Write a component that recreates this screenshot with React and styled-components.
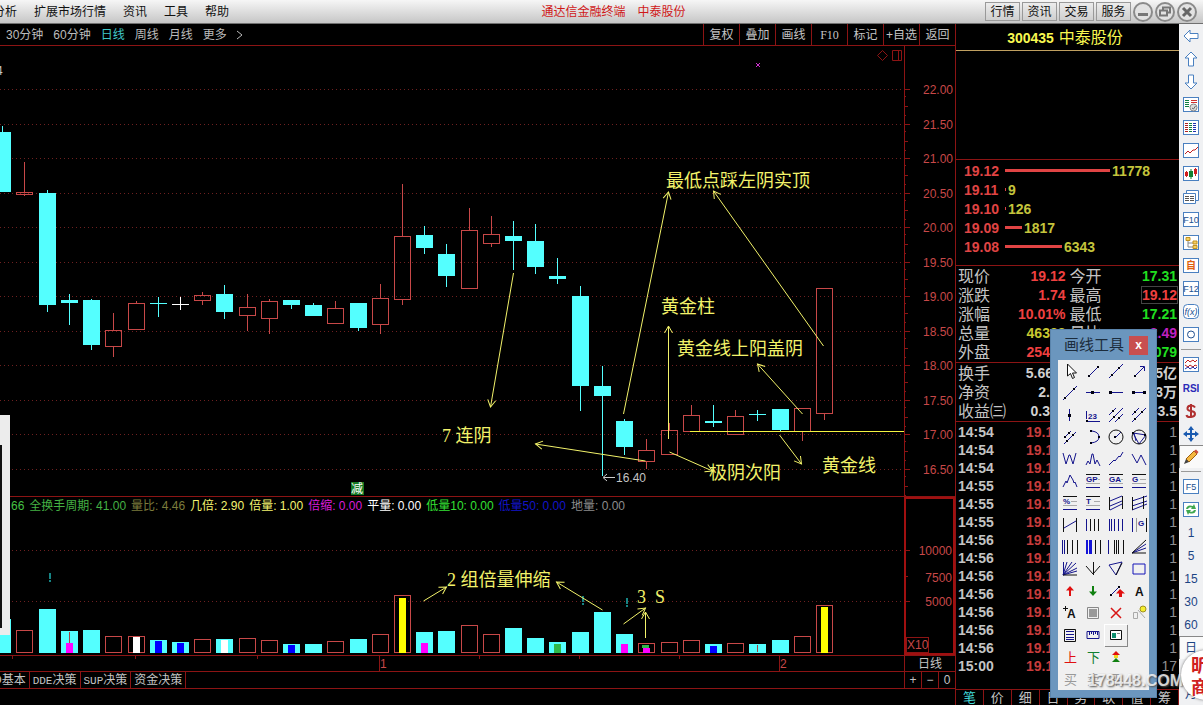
import React from 'react'
import styled, { createGlobalStyle } from 'styled-components'

const RED = '#8c1414'
const UP = '#c84848'
const DOWN = '#54ffff'
const NOTE = '#f2f26a'
const NAVY = '#14148c'

// x, high, body top, body bottom, low, kind
const candles = [
  [2, 126, 132, 192, 192, 'd'],
  [24, 162, 192, 195, 196, 'u'],
  [47, 190, 193, 305, 312, 'd'],
  [69, 294, 300, 303, 325, 'd'],
  [91, 299, 300, 345, 350, 'd'],
  [113, 313, 330, 347, 357, 'u'],
  [136, 301, 303, 330, 330, 'u'],
  [158, 297, 303, 304, 317, 'd'],
  [180, 297, 304, 305, 310, 'w'],
  [202, 292, 295, 301, 305, 'u'],
  [224, 285, 294, 312, 319, 'd'],
  [247, 294, 307, 316, 331, 'u'],
  [269, 299, 301, 319, 334, 'u'],
  [291, 300, 300, 305, 309, 'd'],
  [313, 303, 305, 316, 316, 'd'],
  [335, 301, 308, 324, 324, 'u'],
  [358, 303, 303, 328, 331, 'd'],
  [380, 284, 298, 325, 334, 'u'],
  [402, 184, 236, 300, 305, 'u'],
  [424, 226, 235, 248, 254, 'd'],
  [446, 244, 254, 276, 287, 'd'],
  [469, 208, 230, 289, 289, 'u'],
  [491, 216, 234, 244, 247, 'u'],
  [513, 221, 236, 241, 270, 'd'],
  [535, 224, 241, 267, 274, 'd'],
  [557, 258, 276, 279, 284, 'd'],
  [580, 286, 296, 386, 411, 'd'],
  [602, 366, 386, 396, 476, 'd'],
  [624, 419, 421, 447, 455, 'd'],
  [646, 439, 450, 462, 469, 'u'],
  [669, 423, 430, 455, 455, 'u'],
  [691, 405, 415, 432, 432, 'u'],
  [713, 405, 421, 423, 427, 'd'],
  [735, 410, 416, 435, 435, 'u'],
  [757, 410, 414, 415, 421, 'd'],
  [780, 409, 409, 430, 431, 'd'],
  [802, 408, 408, 432, 441, 'u'],
  [824, 288, 288, 414, 420, 'u'],
]

// top of each volume bar, then an optional inner marker [top, colour]
const volumes = [
  [619], [630], [609], [631, 643, '#f0f'], [630], [636], [636, 637, '#fff'],
  [640, 641, '#00f'], [642, 643, '#00f'], [639], [639, 640, '#fff'], [638],
  [640], [644, 645, '#00f'], [644], [641], [639], [634], [595, 598, '#ff0'],
  [632, 643, '#f0f'], [631], [625], [634], [628], [638], [642, 644, '#2fb84a'],
  [632], [612], [634, 644, '#f0f'], [643, 648, '#f0f'], [642], [640],
  [644, 646, '#00f'], [643], [644], [640], [636], [605, 607, '#ff0'],
]

const priceLevels = [
  '22.00', '21.50', '21.00', '20.50', '20.00', '19.50',
  '19.00', '18.50', '18.00', '17.50', '17.00', '16.50',
]
const levelY = (i) => Math.floor(89.5 + 34.5 * i)

const arrows = [
  [623, 414, 668, 192], [823, 346, 713, 191], [513, 273, 490, 407],
  [645, 461, 535, 444], [668, 439, 668, 326], [669, 452, 712, 471],
  [802, 414, 757, 364], [779, 435, 801, 464],
]
const volumeArrows = [
  [423, 601, 446, 587], [602, 610, 556, 582],
  [623, 624, 645, 608], [645, 638, 645, 612],
]
const notes = [
  [666, 187, '最低点踩左阴实顶'], [661, 313, '黄金柱'],
  [677, 355, '黄金线上阳盖阴'], [822, 472, '黄金线'],
  [709, 479, '极阴次阳'], [442, 442, '7 连阴'],
]

const Glyph = styled.text`
  font: ${(p) => (p.$big ? 'bold 12px' : p.$cjk ? '13px' : 'bold 8px')}
    'Liberation Sans', 'Noto Sans CJK SC', sans-serif;
  fill: ${(p) => p.$fill || (p.$big ? '#111' : NAVY)};
`

const Side = styled.text`
  font: ${(p) => (p.$italic ? 'italic' : '')} ${(p) => (p.$bold ? 'bold 10px' : '9px')}
    'Liberation Sans', 'Noto Sans CJK SC', sans-serif;
  fill: ${(p) => p.$fill || '#205090'};
  text-anchor: middle;
`

const Candle = ({ data }) => {
  const [x, high, top, bottom, low, kind] = data
  if (kind === 'u') {
    return (
      <g stroke={UP} fill='none' shapeRendering='crispEdges'>
        <path d={`M${x + 0.5} ${high}V${top}M${x + 0.5} ${bottom}V${low}`} />
        <rect x={x - 7.5} y={top + 0.5} width='16' height={bottom - top - 1} />
      </g>
    )
  }
  return (
    <g fill={kind === 'w' ? '#fff' : DOWN} shapeRendering='crispEdges'>
      <rect x={x} y={high} width='1' height={low - high} />
      <rect x={x - 8} y={top} width='17' height={bottom - top} />
    </g>
  )
}

const Volume = ({ x, up, data }) => {
  const [top, mark, color] = data
  return (
    <g shapeRendering='crispEdges'>
      {up ? (
        <rect x={x - 7.5} y={top + 0.5} width='16' height={652 - top} stroke={UP} fill='none' />
      ) : (
        <rect x={x - 8} y={top} width='17' height={653 - top} fill={DOWN} />
      )}
      {mark && <rect x={x - 3} y={mark} width='7' height={653 - mark} fill={color} />}
    </g>
  )
}

const Arrows = ({ id, list }) => (
  <g stroke={NOTE} fill='none'>
    <marker id={id} viewBox='-8 -5 10 10' markerWidth='10' markerHeight='10' orient='auto' markerUnits='userSpaceOnUse'>
      <path d='M-7 -4 0 0-7 4' />
    </marker>
    {list.map(([a, b, c, d]) => (
      <line key={`${a}-${b}`} x1={a + 0.5} y1={b} x2={c + 0.5} y2={d} markerEnd={`url(#${id})`} />
    ))}
  </g>
)

const PricePlot = () => (
  <Plot>
    <g transform='translate(0 -46)'>
      {priceLevels.map((p, i) => (
        <GridLine key={p} x1='0' x2='100%' y1={levelY(i) + 0.5} y2={levelY(i) + 0.5} />
      ))}
      {candles.map((c) => <Candle key={c[0]} data={c} />)}
      <path d='M690 431.5H2000' stroke='#f4f440' />
      <Arrows id='note-head' list={arrows} />
      {notes.map(([x, y, t]) => <Note key={t} x={x} y={y}>{t}</Note>)}
      <path d='M604 477.5H615M607 474l-4 3.500 4 3.500' stroke='#ccc' fill='none' />
      <Small x='616' y='482'>16.40</Small>
      <path d='m756 63 4 4m0-4-4 4' stroke='#d030d0' />
      <Small x='-4' y='75'>4</Small>
      <path d='m882.500 50.500 5 5-5 5-5-5z M892.500 50.500h9v10h-9z M898.500 50.500v10' stroke={RED} fill='none' />
      <rect x='351' y='482' width='13' height='13' fill='#167a24' />
      <Small x='351' y='493' $fill='#fff'>减</Small>
    </g>
  </Plot>
)

const VolumePlot = () => (
  <Plot>
    <g transform='translate(0 -515)'>
      <GridLine x1='0' x2='100%' y1='550.5' y2='550.5' />
      <GridLine x1='0' x2='100%' y1='601.5' y2='601.5' />
      {candles.map((c, i) => (
        <Volume key={c[0]} x={c[0]} up={c[5] === 'u'} data={volumes[i]} />
      ))}
      <path d='M69.500 632v11M757.500 645v7' stroke='#a04040' />
      <path d='M642 646.500h7' stroke='#2fb84a' strokeWidth='3' />
      <g fill='#168484'>
        <path d='M49 573h2v6h-2zM49 580h2v2h-2zM582 596h2v6h-2zM582 603h2v2h-2zM626 598h2v6h-2zM626 605h2v2h-2z' />
      </g>
      <Arrows id='volume-head' list={volumeArrows} />
      <Note x='447' y='586'>2 组倍量伸缩</Note>
      <Note x='637' y='603'>{'3  S'}</Note>
    </g>
  </Plot>
)

const PriceAxis = () => (
  <Axis>
    <Plot>
      <g transform='translate(0 -46)' stroke={RED}>
        {priceLevels.map((p, i) => (
          <path key={p} d={`M0 ${levelY(i) + 0.5}h5M0 ${levelY(i) + 17.5}h3M0 ${levelY(i) + 7.5}h1M0 ${levelY(i) + 26.5}h1`} />
        ))}
        {priceLevels.map((p, i) => (
          <Scale key={p} x='48' y={levelY(i) + 5}>{p}</Scale>
        ))}
      </g>
    </Plot>
  </Axis>
)

/* palette glyphs, each on a 20 x 20 field */

const dot = (x, y) => `M${x - 1} ${y - 1}h2v2h-2z`

const Lines = ({ d, k, dots, fill = 'none' }) => (
  <>
    {d && <path d={d} stroke={NAVY} fill={fill} />}
    {k && <path d={k} stroke='#111' fill='none' />}
    {dots && <path d={dots.map(([x, y]) => dot(x, y)).join('')} fill='#001' />}
  </>
)

const HLine = ({ dots }) => (
  <>
    <path d='M3 9.500h14' stroke={NAVY} />
    <path d={dots.map((x) => `M${x} 8h3v3h-3z`).join('')} fill='#001' />
  </>
)

const Lettered = ({ t }) => (
  <>
    <path d='M3 3.500h14' stroke='#111' />
    <path d='M11 8.500h6M3 12.500h14' stroke='#aaa' />
    <path d='M3 16.500h14' stroke={NAVY} />
    <rect x='3' y='5' width={t.length > 1 ? 12 : 7} height='7' fill='#f0f0f0' />
    <Glyph x='3' y='11'>{t}</Glyph>
  </>
)

const tools = [
  ['选择', <path d='M7.500 3v12l3-2.500 2 5 2-1-2-4.500h4z' fill='#fff' stroke='#111' />],
  ['线段', <Lines d='M6 15 15 6' dots={[[6, 15], [15, 6]]} />],
  ['直线', <Lines d='M3 17 17 3' dots={[[6, 14], [13, 7]]} />],
  ['箭头', <Lines d='M6 15 15 6M11 5.500h4.500V10' dots={[[6, 15]]} />],
  ['射线', <Lines d='M3 17 17 3' dots={[[5, 15], [14, 6]]} />],
  ['水平线', <HLine dots={[8]} />],
  ['水平射线', <HLine dots={[3]} />],
  ['水平线段', <HLine dots={[3, 14]} />],
  ['垂直线', <><path d='M9.500 4v12' stroke={NAVY} /><path d='M8 9h3v3H8z' fill='#001' /></>],
  ['价格标注', <><Lines d='M3.500 6v8M4 16.500h13' dots={[[4, 16]]} /><Glyph x='5' y='14'>23</Glyph></>],
  ['平行线组', <Lines d='M3 10 10 3M3 17 17 3M9 17l8-8' dots={[[7, 6], [8, 12], [13, 13]]} />],
  ['平行线', <Lines d='M3 10 10 3M3 17 17 3' dots={[[6, 7], [13, 7], [6, 14]]} />],
  ['等距线', <Lines d='M4 11 11 4M4 17 16 5' dots={[[5, 10], [9, 6], [7, 14], [13, 8]]} />],
  ['圆弧', <Lines d='M9 4q7 1 7 6t-8 6' dots={[[8, 4], [16, 10], [8, 16]]} />],
  ['圆', <Lines k='M17 10a7 7 0 1 1-14 0 7 7 0 1 1 14 0' d='m10 10 5-5' dots={[[9, 10]]} />],
  ['外接圆', <Lines k='M17 10a7 7 0 1 1-14 0 7 7 0 1 1 14 0' d='M4 6l13 2-7 9zM5 6l2 8' dots={[[4, 6], [16, 8]]} />],
  ['波段', <Lines d='M3 4l3 11 3-9 1 0 3 9 3-11' />],
  ['尖峰', <Lines d='M3 16l2-4 2 3 2-10 1 0 2 10 2-4 1 2 2 4' />],
  ['上升浪', <Lines d='M3 16l5-5 1 1 4-5 1 1 3-5' />],
  ['下降浪', <Lines d='M3 5l5 9 4-8 5 10' />],
  ['头肩', <Lines d='M3 16l3-6 1 2 3-8 3 5 1 3 1-1 2 5' />],
  ['黄金价位', <Lettered t='GP' />],
  ['黄金目标', <Lettered t='GA' />],
  ['黄金分割', <Lettered t='G' />],
  ['百分比', <Lettered t='%' />],
  ['分段', <Lettered t='T' />],
  ['速阻线', <Lines k='M3.500 4v13M16.500 3v13' d='M4 8 16 3M4 13 16 8M4 17l12-6' />],
  ['回归带', <Lines k='M3.500 4v13M14.500 3v13' d='M3 8 18 3M3 13 18 8M3 17l15-6' />],
  ['回归线', <Lines k='M3.500 3v14M16.500 3v14' d='M4 13 16 6' />],
  ['周期线', <Lines k='M7.500 4v12M11.500 4v12M15.500 4v12' d='M3.500 4v12' />],
  ['等分周期', <Lines d='M3.500 4v12M5.500 4v12M8.500 4v12M12.500 4v12M16.500 4v12' />],
  ['黄金周期', <><Lines k='M17.500 3v14' d='M3.500 3v14' /><path d='M7.500 3v14' stroke='#999' /><Glyph x='9' y='11'>G</Glyph></>],
  ['时间带', <Lines k='M7.500 3v14M12.500 3v14M17.500 3v14' d='M2.500 3v14M4.500 3v14' />],
  ['费波周期', <><path d='M3 3h2v14h-2zM6 3h3v14h-3z' fill='#1414d8' /><Lines k='M12.500 3v14M17.500 3v14' /></>],
  ['对称线', <Lines k='M8.500 3v14M10.500 3v14M12.500 3v14M17.500 3v14' d='M2.500 3v14' />],
  ['扇形线', <Lines k='M3 16 17 3M3 16h14' d='M3 16 17 7M3 16l14-5' />],
  ['江恩线', <Lines k='M3 16h14' d='M3.500 3v13M3 16 7 3M3 16 12 3M3 16 16 4M3 16l14-7M3 16l14-4' />],
  ['分叉', <Lines k='M3 7l7 8 7-8M10.500 3v13' />],
  ['三角形', <Lines d='M3 6 16 3 10 16z' k='m10 16 6-12' />],
  ['矩形', <path d='M4 5h12v10H4z' fill='none' stroke='#1414b8' />],
  ['上箭头', <path d='m10 5-4 4.500h3V15h2V9.500h3z' fill='#e01010' />],
  ['下箭头', <path d='m10 15-4-4.500h3V5h2v5.500h3z' fill='#108010' />],
  ['趋势标记', <><Lines d='M4 15 14 5' dots={[[5, 14], [13, 6]]} /><path d='m14 8-4 4.500h3V16h3v-3.500h3z' fill='#e01010' /></>],
  ['文字', <Glyph $big x='6' y='15'>A</Glyph>],
  ['加文字', <><Glyph $big x='7' y='15'>A</Glyph><path d='M3 5.500h5M5.500 3v5' stroke='#111' /></>],
  ['填充', <><path d='M4.500 4.500h11v11h-11z' fill='none' stroke='#888' /><path d='M6 6h8v8H6z' fill='#999' /></>],
  ['删除', <path d='m5 5 10 10M15 5 5 15' stroke='#d81414' strokeWidth='1.500' />],
  ['隐藏', <><path d='M4.500 9.500h4v6h-4zM9 7l7 8' fill='none' stroke='#aaa' /><circle cx='14' cy='6' r='3' fill='#f4ee30' stroke='#a09020' /></>],
  ['列表', <><path d='M4.500 4.500h11v12h-11z' fill='none' stroke='#111' /><path d='M6 6.500h8M6 9.500h8M6 12.500h8M6 14.500h8' stroke={NAVY} /></>],
  ['标尺', <><path d='M4 6.500h12v7H4z' fill='none' stroke={NAVY} /><path d='M6.500 7v3M8.500 7v2M10.500 7v3M12.500 7v2M14.500 7v3' stroke={NAVY} /></>],
  ['图片', <><path d='M4.500 5.500h11v9h-11z' fill='#fff' stroke='#111' /><path d='M6 8h4v5H6z' fill='#109070' /><path d='M11 8.500h3' stroke='#888' /></>, true],
  null,
  ['上', <Glyph $cjk x='4' y='15' $fill='#e01010'>上</Glyph>],
  ['下', <Glyph $cjk x='4' y='15' $fill='#108030'>下</Glyph>],
  ['三色', <><path d='m10 4-4 4h8z' fill='#e01010' /><path d='M8 8h4v3H8z' fill='#f0d820' /><path d='m10 11-4 4h8z' fill='#108010' /></>],
  null,
  ['买', <Glyph $cjk x='4' y='15' $fill='#999'>买</Glyph>],
  ['卖', <Glyph $cjk x='4' y='15' $fill='#999'>卖</Glyph>],
  ['平', <Glyph $cjk x='4' y='15' $fill='#999'>平</Glyph>],
]

/* side strip glyphs, each on a 16 x 16 field */

const Framed = ({ children, r = 0 }) => (
  <>
    <rect x='0.5' y='0.5' width='15' height='14' rx={r} fill='#fff' stroke='#4a80c0' />
    {children}
  </>
)

const stripTop = [
  ['后退', <path d='M1 8l6-6v3.500h8v5H7V14z' fill='#fff' stroke='#4a80c0' />],
  ['向上', <path d='M8 1l6 6h-3.500v8h-5V7H2z' fill='#fff' stroke='#4a80c0' />],
  ['向下', <path d='M8 15l6-6h-3.500V1h-5v8H2z' fill='#fff' stroke='#4a80c0' />],
  ['报价', <Framed><path d='M2 3.500h4M2 5.500h4M2 7.500h4M2 9.500h4' stroke='#108040' /><path d='M8 3.500h6M8 5.500h6' stroke='#d03030' /><circle cx='10.500' cy='10.500' r='3.500' fill='#ddd' stroke='#888' /><path d='m9 11 1.500 1 2-3' stroke='#666' fill='none' /></Framed>],
  ['行情列表', <Framed><path d='M2 3.500h3M2 5.500h3M2 7.500h3M2 9.500h3M2 11.500h3' stroke='#b02020' /><path d='M6 3.500h3M6 5.500h3M6 7.500h3M6 9.500h3M6 11.500h3' stroke='#108040' /><path d='M10 3.500h3M10 5.500h3M10 7.500h3M10 9.500h3M10 11.500h3' stroke='#2030b0' /></Framed>],
  ['分时', <Framed><path d='m2 11 3-3 2 2 3-3 2 0 3-3' stroke='#c02020' fill='none' /></Framed>],
  ['K线', <Framed><path d='M2 6h3v4H2zM11 3h3v5h-3z' fill='#d02020' /><path d='M3.500 5v6M12.500 2v8' stroke='#d02020' /><path d='M6 5h4v6H6z' fill='#108030' /><path d='M8 3v10' stroke='#108030' /></Framed>],
  ['窗口', <><path d='M3.500 1.500h12v10h-12z' fill='#fff' stroke='#4a80c0' /><path d='M.500 4.500h12v10H.500z' fill='#fff' stroke='#4a80c0' /><path d='M2 7.500h4M2 9.500h4M2 11.500h4M7 7.500h4M7 9.500h4M7 11.500h4' stroke='#555' /></>],
  ['F10', <Framed><Side x='8' y='11'>F10</Side></Framed>],
  ['板块', <Framed><path d='M5 5v7h5M5 8h5' stroke='#888' fill='none' /><path d='M3 2.500h4v3H3zM10 6h4v3h-4zM10 10.500h4v3h-4z' fill='#f6d060' stroke='#c09020' /></Framed>],
  ['自选', <Framed><Side $bold x='8' y='11' $fill='#e06010'>自</Side></Framed>],
  ['F12', <Framed><Side x='8' y='11'>F12</Side></Framed>],
  ['公式', <Framed r='4'><Side $italic x='8' y='11'>f(x)</Side></Framed>],
  ['圆点', <Framed><circle cx='8' cy='7.500' r='3.500' fill='none' stroke='#205090' /></Framed>],
]
const stripMiddle = [
  ['叠加线', <Framed><path d='m2 6 3-3 2 2 3-2 2 2 2-2' stroke='#c02020' fill='none' /><path d='m2 8 3 2 2-2 3 2 2-2 2 1' stroke='#c02020' fill='none' /><path d='m2 12 3-2 2 2 3-2 2 2 2-2' stroke='#2030b0' fill='none' /></Framed>],
  ['RSI', <Side $bold x='8' y='12' $fill='#2a2ab8'>RSI</Side>],
  ['资金', <path d='M12 4.500Q11 2.500 8 2.500T4.500 5t3.500 3 4 3-4 3-4.500-2M8 1v14' stroke='#b03030' strokeWidth='2' fill='none' />],
  ['移动', <path d='m8 0 3 4H9v3h3V5l4 3-4 3V9H9v3h2l-3 4-3-4h2V9H4v2L0 8l4-3v2h3V4H5z' fill='#1a5ab0' />],
  ['画线', <><path d='m3 10 8-8 3 3-8 8z' fill='#f4b840' stroke='#a06010' /><path d='m3 10 3 3-5 2z' fill='#444' /><path d='m11 2 3 3 1.500-2-2.500-2.500z' fill='#d05040' /></>, true],
]
const stripBottom = [
  ['F5', <Framed><Side x='8' y='11'>F5</Side></Framed>],
  ['刷新', <Framed><path d='M3 7q1-5 7-3l1-2 2 5-5 0 1-1.500q-3-1-4 1.500zM13 8q-1 5-7 3l-1 2-2-5 5 0-1 1.500q3 1 4-1.500z' fill='#40a850' /></Framed>],
]

const menus = ['扩展市场行情', '资讯', '工具', '帮助']
const periods = ['30分钟', '60分钟', '日线', '周线', '月线', '更多']
const actions = ['复权', '叠加', '画线', 'F10', '标记', '+自选', '返回']
const indicators = [
  ['66', '#44c044'], ['全换手周期: 41.00', '#44b044'], ['量比: 4.46', '#7c7c3c'],
  ['几倍: 2.90', '#f4f470'], ['倍量: 1.00', '#f4f470'], ['倍缩: 0.00', '#d81cd8'],
  ['平量: 0.00', '#fff'], ['低量10: 0.00', '#34e034'], ['低量50: 0.00', '#1414c8'],
  ['地量: 0.00', '#8c8c8c'],
]
const orders = [['19.12', 105, 11778], ['19.11', 1, 9], ['19.10', 1, 126], ['19.09', 17, 1817], ['19.08', 57, 6343]]
const quotes = [
  ['现价', '19.12', 'red', '今开', '17.31', 'green'],
  ['涨跌', '1.74', 'red', '最高', '19.12', 'boxed'],
  ['涨幅', '10.01%', 'red', '最低', '17.21', 'green'],
  ['总量', '46388', 'yellow', '量比', '2.49', 'purple'],
  ['外盘', '25409', 'red', '内盘', '21079', 'green'],
]
const ratios = [
  ['换手', '5.66%', 'plain', '股本', '1.05亿', 'plain'],
  ['净资', '2.63', 'plain', '流通', '8193万', 'plain'],
  ['收益㈢', '0.384', 'plain', 'PE', '33.5', 'plain'],
]
const times = [
  '14:54', '14:54', '14:54', '14:55', '14:55', '14:55', '14:56',
  '14:56', '14:56', '14:56', '14:56', '14:56', '14:56', '15:00',
]
const sideTabs = ['笔', '价', '细', '日', '势', '联', '值', '筹']

const App = () => (
  <Window>
    <GlobalStyle />
    <TitleBar>
      <Menus>
        <MenuButton $cut>分析</MenuButton>
        {menus.map((m) => <MenuButton key={m}>{m}</MenuButton>)}
      </Menus>
      <Title><span>通达信金融终端</span><span>中泰股份</span></Title>
      <TitleActions>
        {['行情', '资讯', '交易', '服务'].map((t) => <TitleButton key={t}>{t}</TitleButton>)}
        <RoundButton aria-label='最小化'><svg width='20' height='20'><path d='M5 12.500h10' stroke='#777' strokeWidth='3' /></svg></RoundButton>
        <RoundButton aria-label='还原'><svg width='20' height='20'><path d='M8 8V5.500h7v5h-3M5 8.500h7v5H5z' stroke='#777' strokeWidth='2' fill='none' /></svg></RoundButton>
        <RoundButton aria-label='关闭'><svg width='20' height='20'><path d='m6 6 8 8m0-8-8 8' stroke='#666' strokeWidth='3' /></svg></RoundButton>
      </TitleActions>
    </TitleBar>
    <Body>
      <ChartPane>
        <PeriodBar>
          <Periods>
            {periods.map((p) => <PeriodButton key={p} $active={p === '日线'}>{p}</PeriodButton>)}
            <svg width='6' height='12'><path d='m0 2 5 4-5 4' stroke='#bbb' fill='none' /></svg>
          </Periods>
          {actions.map((a) => <ActionButton key={a} $mono={a === 'F10'}>{a}</ActionButton>)}
        </PeriodBar>
        <PriceRow>
          <PricePlot />
          <PriceAxis />
        </PriceRow>
        <VolumeRow>
          <VolumeMain>
            <IndicatorLine>
              {indicators.map(([t, c]) => <Indicator key={t} $color={c}>{t}</Indicator>)}
            </IndicatorLine>
            <VolumePlot />
          </VolumeMain>
          <VolumeAxis>
            <Plot>
              <path d='M0 51.500h4M0 77.500h2M0 102.500h4' stroke={RED} />
              <Scale x='46' y='56'>10000</Scale>
              <Scale x='46' y='83'>7500</Scale>
              <Scale x='46' y='107'>5000</Scale>
            </Plot>
            <Unit>X10</Unit>
          </VolumeAxis>
        </VolumeRow>
        <DateRow>
          <Plot>
            <path d='M12.500 0v3M135.500 0v3M257.500 0v3M479.500 0v3M579.500 0v3M679.500 0v3M379.500 0v16M779.500 0v16' stroke={RED} />
            <Scale $start x='380' y='12'>1</Scale>
            <Scale $start x='780' y='12'>2</Scale>
          </Plot>
          <DateUnit>日线</DateUnit>
        </DateRow>
        <TabRow>
          <Tabs>
            <Tab $first>D基本</Tab>
            <Tab><Latin>DDE</Latin>决策</Tab>
            <Tab><Latin>SUP</Latin>决策</Tab>
            <Tab>资金决策</Tab>
          </Tabs>
          <Zoom>+</Zoom>
          <Zoom>−</Zoom>
          <Zoom>0</Zoom>
        </TabRow>
        <Foot />
        <Drawer><DrawerInner /></Drawer>
      </ChartPane>

      <QuotePane>
        <StockName><b>300435</b>中泰股份</StockName>
        <Asks />
        <Orders>
          {orders.map(([price, w, n]) => (
            <Order key={price}>
              <OrderPrice>{price}</OrderPrice>
              <OrderBar style={{ width: w }} />
              <span>{n}</span>
            </Order>
          ))}
        </Orders>
        {[quotes, ratios].map((group, i) => (
          <Facts key={i}>
            <tbody>
              {group.map(([a, av, ac, b, bv, bc]) => (
                <tr key={a}>
                  <th scope='row'>{a}</th>
                  <Value $tone={ac}>{av}</Value>
                  <th scope='row'>{b}</th>
                  <Value $tone={bc}>{bc === 'boxed' ? <span>{bv}</span> : bv}</Value>
                </tr>
              ))}
            </tbody>
          </Facts>
        ))}
        <TickScroll>
          <Ticks>
            <tbody>
              {times.map((t, i) => (
                <tr key={i}>
                  <td>{t}</td>
                  <td>19.12</td>
                  <td>{i === 13 ? 17 : 1}</td>
                </tr>
              ))}
            </tbody>
          </Ticks>
        </TickScroll>
        <SideTabs>
          {sideTabs.map((t, i) => <SideTab key={t} $active={i === 0}>{t}</SideTab>)}
        </SideTabs>
      </QuotePane>

      <Strip>
        {stripTop.map(([n, g]) => <StripButton key={n} aria-label={n}><svg width='16' height='16'>{g}</svg></StripButton>)}
        <StripRule />
        {stripMiddle.map(([n, g, on]) => <StripButton key={n} $on={on} aria-label={n}><svg width='16' height='16'>{g}</svg></StripButton>)}
        <StripRule />
        {stripBottom.map(([n, g]) => <StripButton key={n} aria-label={n}><svg width='16' height='16'>{g}</svg></StripButton>)}
        {['1', '5', '15', '30', '60', '日', '周', '月'].map((t) => (
          <StripButton key={t} $on={t === '日'}>{t}</StripButton>
        ))}
      </Strip>
    </Body>

    <Palette aria-label='画线工具'>
      <PaletteHead>
        画线工具
        <CloseButton aria-label='关闭画线工具'>x</CloseButton>
      </PaletteHead>
      <ToolGrid>
        {tools.map((t, i) =>
          t ? (
            <ToolButton key={t[0]} $on={t[2]} aria-label={t[0]}>
              <svg width='20' height='20' viewBox='0 0 20 20'>{t[1]}</svg>
            </ToolButton>
          ) : (
            <span key={i} />
          )
        )}
      </ToolGrid>
    </Palette>
    <Watermark>178448.COM</Watermark>
    <Seal>昕<br />商</Seal>
  </Window>
)

export default App

const GlobalStyle = createGlobalStyle`
  * {
    box-sizing: border-box;
  }
  body {
    margin: 0;
    background: #000;
    color: #c4c4c4;
    font: 12px/16px 'Liberation Sans', 'Noto Sans CJK SC', sans-serif;
    overflow: hidden;
  }
  button {
    margin: 0;
    padding: 0;
    border: 0;
    background: none;
    color: inherit;
    font: inherit;
    white-space: nowrap;
  }
  svg {
    display: block;
  }
`

const Window = styled.div`
  position: relative;
  display: flex;
  flex-direction: column;
  height: 100vh;
  overflow: hidden;
`

const TitleBar = styled.header`
  display: grid;
  grid-template-columns: 1fr auto 1fr;
  align-items: center;
  height: 24px;
  flex: none;
  color: #111;
  background: linear-gradient(#f6f6f6, #dedede 50%, #c6c6c6);
  border-bottom: 1px solid #707070;
`

const Menus = styled.nav`
  display: flex;
  gap: 17px;
`

const MenuButton = styled.button`
  margin-left: ${(p) => (p.$cut ? '-7px' : '0')};
`

const Title = styled.div`
  display: flex;
  gap: 12px;
  padding-left: 24px;
  color: #d01818;
`

const TitleActions = styled.div`
  display: flex;
  justify-content: flex-end;
  align-items: center;
  gap: 2px;
  padding-right: 6px;
`

const TitleButton = styled.button`
  width: 35px;
  height: 19px;
  border: 1px solid #999;
  background: linear-gradient(#ececec, #cfcfcf);
`

const RoundButton = styled.button`
  width: 20px;
  height: 20px;
  border-radius: 50%;
  box-shadow: inset 0 0 0 2px #8a8a8a;
  background: #e2e2e2;
`

const Body = styled.main`
  display: flex;
  flex: 1;
  min-height: 0;
`

const ChartPane = styled.section`
  position: relative;
  display: flex;
  flex-direction: column;
  flex: 1;
  min-width: 0;
  border-right: 1px solid ${RED};
`

const PeriodBar = styled.div`
  display: flex;
  height: 22px;
  flex: none;
  border-bottom: 1px solid ${RED};
`

const Periods = styled.div`
  display: flex;
  align-items: center;
  flex: 1;
  gap: 10px;
  padding-left: 6px;
`

const PeriodButton = styled.button`
  color: ${(p) => (p.$active ? '#40c8c8' : '#bcbcbc')};
`

const ActionButton = styled.button`
  width: 36px;
  border-left: 1px solid ${RED};
  font-family: ${(p) => (p.$mono ? "'Liberation Serif', serif" : 'inherit')};
`

const Plot = styled.svg`
  flex: 1;
  width: 100%;
  min-width: 0;
  height: 100%;
`

const GridLine = styled.line`
  stroke: #6e2020;
  stroke-dasharray: 1 3;
`

const Note = styled.text`
  font: 18px 'Liberation Serif', 'Noto Sans CJK SC', serif;
  fill: ${NOTE};
  stroke: none;
  white-space: pre;
`

const Small = styled.text`
  font: 12px 'Liberation Sans', 'Noto Sans CJK SC', sans-serif;
  fill: ${(p) => p.$fill || '#c4c4c4'};
`

const Scale = styled.text`
  font: 12px 'Liberation Sans', sans-serif;
  fill: ${UP};
  stroke: none;
  text-anchor: ${(p) => (p.$start ? 'start' : 'end')};
`

const PriceRow = styled.div`
  display: flex;
  flex: 1;
  min-height: 0;
`

const Axis = styled.div`
  display: flex;
  width: 51px;
  flex: none;
  border-left: 1px solid ${RED};
`

const VolumeRow = styled.div`
  display: flex;
  height: 159px;
  flex: none;
  border-top: 1px solid ${RED};
`

const VolumeMain = styled.div`
  display: flex;
  flex-direction: column;
  flex: 1;
  min-width: 0;
`

const IndicatorLine = styled.div`
  display: flex;
  gap: 5px;
  height: 18px;
  flex: none;
  padding-left: 11px;
  line-height: 18px;
  white-space: nowrap;
`

const Indicator = styled.span`
  color: ${(p) => p.$color};
`

const VolumeAxis = styled.div`
  display: flex;
  flex-direction: column;
  width: 51px;
  border: 2px solid #a01010;
`

const Unit = styled.span`
  align-self: flex-start;
  flex: none;
  border: 1px solid ${RED};
  color: ${UP};
  line-height: 14px;
`

const DateRow = styled.div`
  display: flex;
  height: 16px;
  flex: none;
  border-top: 1px solid ${RED};
`

const DateUnit = styled.span`
  width: 51px;
  flex: none;
  border-left: 1px solid ${RED};
  text-align: center;
`

const TabRow = styled.div`
  display: flex;
  height: 17px;
  flex: none;
  border-top: 1px solid ${RED};
  line-height: 16px;
`

const Tabs = styled.div`
  display: flex;
  flex: 1;
`

const Tab = styled.button`
  margin-left: ${(p) => (p.$first ? '-10px' : '0')};
  padding: 0 3px;
  border-right: 1px solid ${RED};
`

const Latin = styled.span`
  font: 11px 'Liberation Mono', monospace;
`

const Zoom = styled.button`
  width: 17px;
  border-left: 1px solid ${RED};
`

const Foot = styled.div`
  height: 17px;
  flex: none;
  border-top: 1px solid ${RED};
`

// edge of a docked window that peeks in from the left
const Drawer = styled.aside`
  position: absolute;
  left: 0;
  top: 391px;
  width: 10px;
  height: 220px;
  padding-top: 30px;
  background: #ececec;
`

const DrawerInner = styled.div`
  width: 2px;
  height: 183px;
  background: #111;
`

const QuotePane = styled.section`
  display: flex;
  flex-direction: column;
  width: 223px;
  flex: none;
`

const StockName = styled.h1`
  display: flex;
  justify-content: center;
  align-items: center;
  gap: 5px;
  height: 27px;
  flex: none;
  margin: 0;
  padding: 2px 5px 0 0;
  border-bottom: 1px solid #c0a060;
  color: #f8f850;
  font-size: 16px;
  font-weight: normal;

  b {
    font-size: 14px;
  }
`

const Asks = styled.div`
  height: 109px;
  flex: none;
  border-bottom: 1px solid ${RED};
`

const Orders = styled.ul`
  height: 106px;
  flex: none;
  margin: 0;
  padding: 1px 8px 0;
  border-bottom: 1px solid ${RED};
  list-style: none;
  color: #c4c43c;
  font-size: 14px;
  font-weight: bold;
`

const Order = styled.li`
  display: flex;
  align-items: center;
  gap: 2px;
  height: 19px;
`

const OrderPrice = styled.span`
  width: 39px;
  color: #e04444;
`

const OrderBar = styled.i`
  height: 3px;
  background: #e04444;
`

const tones = {
  red: '#f04040',
  boxed: '#f04040',
  green: '#20e020',
  yellow: '#c8c830',
  purple: '#c020c0',
  plain: '#d0d0d0',
}

const Facts = styled.table`
  width: 100%;
  flex: none;
  padding-top: 1px;
  border-spacing: 0;
  border-bottom: 1px solid ${RED};
  table-layout: fixed;

  tr {
    height: 19px;
  }
  th,
  td {
    padding: 0 0 0 2px;
    line-height: 19px;
    white-space: nowrap;
  }
  th {
    width: 48px;
    text-align: left;
    font-size: 16px;
    font-weight: normal;
  }
`

const Value = styled.td`
  text-align: right;
  font-size: 14px;
  font-weight: bold;
  color: ${(p) => tones[p.$tone]};

  &:last-child {
    padding-right: 2px;
  }
  &:nth-child(2) {
    padding-right: 2px;
  }
  span {
    outline: 1px solid #444;
  }
`

const TickScroll = styled.div`
  flex: 1;
  min-height: 0;
  padding-top: 1px;
  overflow: hidden;
`

const Ticks = styled.table`
  width: 100%;
  border-spacing: 0;
  font-size: 14px;
  font-weight: bold;

  td {
    height: 18px;
    padding: 0 2px;
    line-height: 18px;
  }
  td:first-child {
    width: 68px;
  }
  td:nth-child(2) {
    color: #c83c3c;
  }
  td:last-child {
    color: #909090;
    text-align: right;
    font-weight: normal;
  }
`

const SideTabs = styled.nav`
  display: flex;
  height: 16px;
  flex: none;
  border-top: 1px solid ${RED};
`

const SideTab = styled.button`
  flex: 1;
  border-right: 1px solid ${RED};
  color: ${(p) => (p.$active ? '#40d8d8' : '#c4c4c4')};
  font-size: 13px;
  line-height: 16px;
`

const Strip = styled.nav`
  display: flex;
  flex-direction: column;
  width: 24px;
  flex: none;
  overflow: hidden;
  background: #f0f1f3;
  color: #1c4484;
`

const StripButton = styled.button`
  display: grid;
  place-items: center;
  height: 23px;
  flex: none;
  box-shadow: ${(p) => (p.$on ? 'inset 1px 1px #888' : 'none')};
  background: ${(p) => (p.$on ? '#fafafa' : 'none')};
`

const StripRule = styled.div`
  height: 1px;
  margin: 3px 2px;
  flex: none;
  background: #999;
`

const Palette = styled.aside`
  position: absolute;
  top: 329px;
  right: 46px;
  width: 107px;
  padding: 0 7px 7px;
  background: #6b96be;
  border: 1px solid #5a84ac;
`

const PaletteHead = styled.div`
  display: flex;
  justify-content: space-between;
  align-items: center;
  height: 30px;
  padding: 0 1px 0 6px;
  color: #1c2c3c;
  font-size: 15px;
`

const CloseButton = styled.button`
  width: 19px;
  height: 19px;
  background: #c84f50;
  color: #fff;
  font-size: 12px;
  font-weight: bold;
  line-height: 16px;
`

const ToolGrid = styled.div`
  display: grid;
  grid-template-columns: repeat(4, 23px);
  grid-auto-rows: 22px;
  background: #f0f0f0;
`

const ToolButton = styled.button`
  display: grid;
  place-items: center;
  box-shadow: ${(p) => (p.$on ? '1px 1px #888, inset 1px 1px #fff' : 'none')};
`

const Watermark = styled.div`
  position: absolute;
  right: 20px;
  bottom: 12px;
  color: rgba(255, 255, 255, 0.8);
  font: bold 16px/24px 'Liberation Sans', sans-serif;
  text-shadow: 1px 1px 2px #555;
`

const Seal = styled.div`
  position: absolute;
  right: -28px;
  bottom: 5px;
  width: 50px;
  height: 50px;
  padding: 5px 0 0 10px;
  border-radius: 50%;
  background: #fff;
  box-shadow: 0 0 3px #777;
  color: #d02020;
  font-size: 18px;
  font-weight: bold;
  line-height: 22px;
`
